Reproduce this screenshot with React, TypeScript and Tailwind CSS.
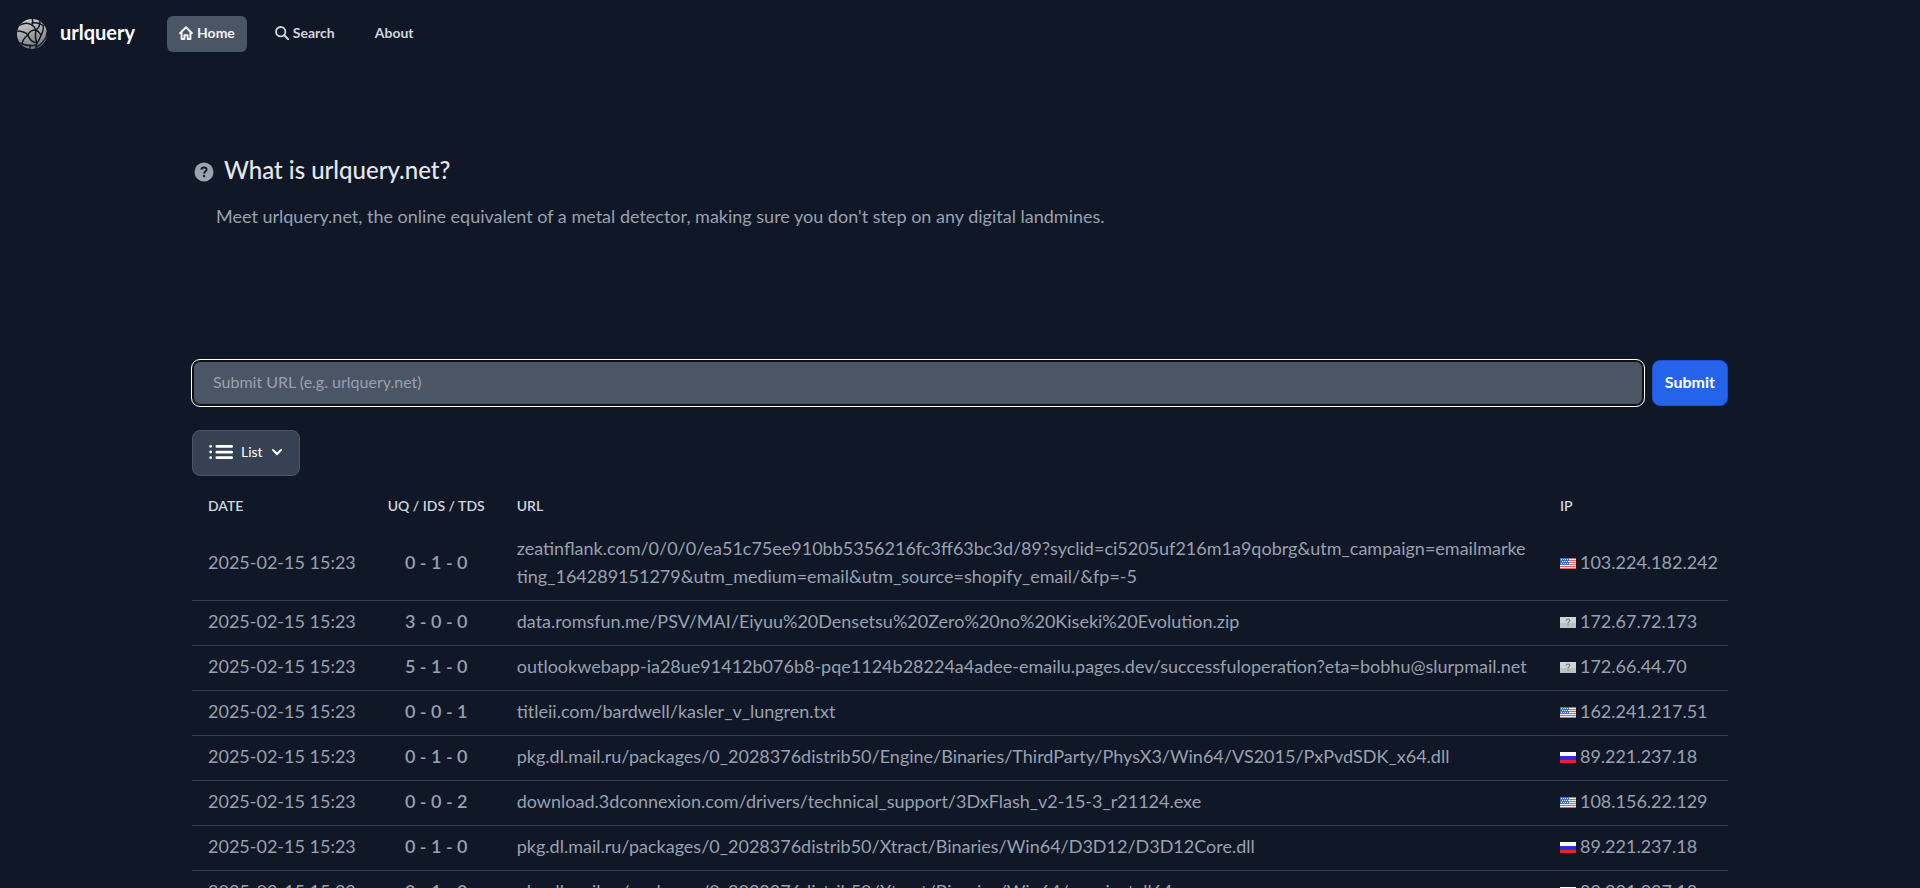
import React from "react";

type Country = "us" | "ru" | "unknown";

interface Report {
  id: number;
  date: string;
  score: string;
  url: string;
  ip: string;
  country: Country;
}

const reports: Report[] = [
  {
    id: 1,
    date: "2025-02-15 15:23",
    score: "0 - 1 - 0",
    url: "zeatinflank.com/0/0/0/ea51c75ee910bb5356216fc3ff63bc3d/89?syclid=ci5205uf216m1a9qobrg&utm_campaign=emailmarketing_164289151279&utm_medium=email&utm_source=shopify_email/&fp=-5",
    ip: "103.224.182.242",
    country: "us",
  },
  {
    id: 2,
    date: "2025-02-15 15:23",
    score: "3 - 0 - 0",
    url: "data.romsfun.me/PSV/MAI/Eiyuu%20Densetsu%20Zero%20no%20Kiseki%20Evolution.zip",
    ip: "172.67.72.173",
    country: "unknown",
  },
  {
    id: 3,
    date: "2025-02-15 15:23",
    score: "5 - 1 - 0",
    url: "outlookwebapp-ia28ue91412b076b8-pqe1124b28224a4adee-emailu.pages.dev/successfuloperation?eta=bobhu@slurpmail.net",
    ip: "172.66.44.70",
    country: "unknown",
  },
  {
    id: 4,
    date: "2025-02-15 15:23",
    score: "0 - 0 - 1",
    url: "titleii.com/bardwell/kasler_v_lungren.txt",
    ip: "162.241.217.51",
    country: "us",
  },
  {
    id: 5,
    date: "2025-02-15 15:23",
    score: "0 - 1 - 0",
    url: "pkg.dl.mail.ru/packages/0_2028376distrib50/Engine/Binaries/ThirdParty/PhysX3/Win64/VS2015/PxPvdSDK_x64.dll",
    ip: "89.221.237.18",
    country: "ru",
  },
  {
    id: 6,
    date: "2025-02-15 15:23",
    score: "0 - 0 - 2",
    url: "download.3dconnexion.com/drivers/technical_support/3DxFlash_v2-15-3_r21124.exe",
    ip: "108.156.22.129",
    country: "us",
  },
  {
    id: 7,
    date: "2025-02-15 15:23",
    score: "0 - 1 - 0",
    url: "pkg.dl.mail.ru/packages/0_2028376distrib50/Xtract/Binaries/Win64/D3D12/D3D12Core.dll",
    ip: "89.221.237.18",
    country: "ru",
  },
  {
    id: 8,
    date: "2025-02-15 15:23",
    score: "0 - 1 - 0",
    url: "pkg.dl.mail.ru/packages/0_2028376distrib50/Xtract/Binaries/Win64/acuninstall64.exe",
    ip: "89.221.237.18",
    country: "ru",
  },
];

const Logo = () => (
  <svg width="32" height="32" viewBox="0 0 32 32" aria-hidden="true">
    <defs>
      <linearGradient id="ball" x1="0.3" y1="0" x2="0.6" y2="1">
        <stop offset="0" stopColor="#cfcfcf" />
        <stop offset="1" stopColor="#77797d" />
      </linearGradient>
      <clipPath id="ballClip">
        <circle cx="16" cy="16" r="15" />
      </clipPath>
    </defs>
    <circle cx="16" cy="16" r="15" fill="url(#ball)" />
    <g
      clipPath="url(#ballClip)"
      fill="none"
      stroke="#111827"
      strokeWidth="1.5"
      strokeLinecap="round"
    >
      <path d="M4 7c4-2 9-2 12 0 2 1 3 3 4 5" />
      <path d="M16 7c1-2 1-4 0-7" />
      <path d="M16 5c4-1 7 0 10 2" />
      <path d="M20 12c3-2 4-5 4-9" />
      <path d="M20 12c-4 0-7 2-8 5" />
      <path d="M1 13c4 0 8 1 11 4" />
      <path d="M12 17c-4 3-6 6-6 10" />
      <path d="M12 17c1 4 4 7 9 8" />
      <path d="M20 12c-1 5-1 9 1 13 0 3-1 5-3 7" />
      <path d="M20 12c2 1 4 3 5 5 2-3 3-6 2-10" />
      <path d="M25 17c-1 3-2 6-4 8" />
      <path d="M31 14c0 6-4 11-10 15" />
      <path d="M4 25c4 2 9 4 16 2" />
      <path d="M14 27v5" />
    </g>
  </svg>
);

const HomeIcon = () => (
  <svg width="14" height="14" viewBox="0 0 14 14" fill="none" aria-hidden="true">
    <path
      d="M1 7.2 7 1.3l6 5.9M2.6 6v7h2.8V9.2h3.2V13h2.8V6"
      stroke="currentColor"
      strokeWidth="1.9"
      strokeLinejoin="round"
      strokeLinecap="round"
    />
  </svg>
);

const SearchIcon = () => (
  <svg width="14" height="14" viewBox="0 0 14 14" fill="none" aria-hidden="true">
    <circle cx="5.7" cy="5.7" r="4.7" stroke="currentColor" strokeWidth="1.8" />
    <path d="m9.3 9.3 3.9 3.9" stroke="currentColor" strokeWidth="2" strokeLinecap="round" />
  </svg>
);

const HelpIcon = () => (
  <svg className="mt-1" width="20" height="20" viewBox="0 0 20 20" aria-hidden="true">
    <circle cx="10" cy="10" r="9.5" fill="#9ca3af" />
    <path
      d="M7.4 7.7c.1-1.4 1.1-2.2 2.6-2.2s2.6.8 2.6 2.1c0 1.9-2.5 1.8-2.5 3.8"
      fill="none"
      stroke="#111827"
      strokeWidth="1.9"
    />
    <circle cx="10.1" cy="14" r="1.2" fill="#111827" />
  </svg>
);

const ListIcon = () => (
  <svg width="24" height="16" viewBox="0 0 24 16" fill="currentColor" aria-hidden="true">
    <circle cx="1.7" cy="2.3" r="1.4" />
    <circle cx="1.7" cy="8" r="1.4" />
    <circle cx="1.7" cy="13.7" r="1.4" />
    <rect x="6.5" y="1" width="17.5" height="2.7" rx="1.2" />
    <rect x="6.5" y="6.7" width="17.5" height="2.7" rx="1.2" />
    <rect x="6.5" y="12.3" width="17.5" height="2.7" rx="1.2" />
  </svg>
);

const ChevronIcon = () => (
  <svg width="12" height="12" viewBox="0 0 12 12" fill="none" aria-hidden="true">
    <path d="m2 4 4 4 4-4" stroke="currentColor" strokeWidth="2" strokeLinecap="round" />
  </svg>
);

const Flag: React.FC<{ country: Country }> = ({ country }) => {
  if (country === "us") {
    return (
      <svg className="-mb-px" width="16" height="11" viewBox="0 0 16 11" role="img" aria-label="United States">
        <rect width="16" height="11" fill="#f4ecec" />
        <path
          d="M0 .5h16M0 2.5h16M0 4.5h16M0 6.5h16M0 8.5h16M0 10.5h16"
          stroke="#d8645c"
        />
        <rect width="9" height="7" fill="#3f6fd0" />
        <path
          d="M1 1.5h8M2 3.5h7M1 5.5h8"
          stroke="#dfe8fb"
          strokeDasharray="1 1"
        />
      </svg>
    );
  }
  if (country === "ru") {
    return (
      <svg className="-mb-px" width="16" height="11" viewBox="0 0 16 11" role="img" aria-label="Russia">
        <rect width="16" height="4" fill="#fbfbfb" />
        <rect y="4" width="16" height="4" fill="#2b2be0" />
        <rect y="8" width="16" height="3" fill="#f0202b" />
      </svg>
    );
  }
  return (
    <svg className="-mb-px" width="16" height="11" viewBox="0 0 16 11" role="img" aria-label="Unknown country">
      <rect width="16" height="11" fill="#cfd5d6" />
      <rect y="6" width="16" height="5" fill="#bcc3c4" />
      <path
        d="M6.4 3.8c0-1.1.7-1.7 1.7-1.7s1.7.6 1.7 1.5c0 1.2-1.7 1.2-1.7 2.8M8.1 7.6v1.3"
        fill="none"
        stroke="#7f8688"
        strokeWidth="1.2"
      />
    </svg>
  );
};

const Navbar = () => (
  <nav className="flex items-center px-4 py-4">
    <a href="#" className="flex items-center gap-3 text-xl font-bold text-white">
      <Logo />
      <span className="pb-1">urlquery</span>
    </a>
    <div className="ml-8 flex items-center gap-4 text-sm font-bold text-gray-300">
      <a
        href="#"
        aria-current="page"
        className="flex h-9 items-center gap-1 rounded-md bg-gray-600 px-3 pb-0.5 text-gray-100"
      >
        <HomeIcon />
        Home
      </a>
      <a href="#" className="flex h-9 items-center gap-1 rounded-md px-3 pb-0.5">
        <SearchIcon />
        Search
      </a>
      <a href="#" className="flex h-9 items-center rounded-md px-3 pb-0.5">
        About
      </a>
    </div>
  </nav>
);

const ReportTable = () => (
  <table className="mt-2 w-full text-left text-lg text-gray-400">
    <thead className="text-sm text-gray-300 uppercase">
      <tr>
        <th scope="col" className="px-4 py-3 font-semibold">Date</th>
        <th scope="col" className="px-4 py-3 text-center font-semibold whitespace-nowrap">
          UQ / IDS / TDS
        </th>
        <th scope="col" className="px-4 py-3 font-semibold">URL</th>
        <th scope="col" className="px-4 py-3 font-semibold">IP</th>
      </tr>
    </thead>
    <tbody>
      {reports.map((report) => (
        <tr key={report.id} className="border-b border-gray-700">
          <td className="px-4 pt-1.5 pb-2.5 whitespace-nowrap">{report.date}</td>
          <td className="px-4 pt-1.5 pb-2.5 text-center font-semibold whitespace-nowrap">
            {report.score}
          </td>
          <td className="w-full px-4 pt-1.5 pb-2.5 break-all">
            <a href="#">{report.url}</a>
          </td>
          <td className="pt-1.5 pr-2.5 pb-2.5 pl-4 whitespace-nowrap">
            <div className="flex items-baseline gap-1">
              <Flag country={report.country} />
              {report.ip}
            </div>
          </td>
        </tr>
      ))}
    </tbody>
  </table>
);

const App = () => {
  return (
    <div className="min-h-screen bg-gray-900 font-[Lato,Carlito,sans-serif]">
      <Navbar />
      <main className="mx-auto w-4/5">
        {/* intro */}
        <section className="px-0.5 pt-[86px]">
          <h1 className="flex items-center gap-2.5 text-2xl font-medium text-gray-200">
            <HelpIcon />
            What is urlquery.net?
          </h1>
          <p className="mt-4 pl-[22px] text-lg text-gray-400">
            Meet urlquery.net, the online equivalent of a metal detector, making sure you don't
            step on any digital landmines.
          </p>
        </section>

        {/* submit form */}
        <form className="mt-[130px] flex gap-2" onSubmit={(e) => e.preventDefault()}>
          <input
            type="text"
            autoFocus
            aria-label="Submit URL"
            placeholder="Submit URL (e.g. urlquery.net)"
            className="h-[46px] min-w-0 flex-1 rounded-lg border border-[#101010] bg-gray-600 px-5 pb-1 text-base text-white caret-white inset-ring inset-ring-[#101010] outline outline-white placeholder:text-gray-400"
          />
          <button
            type="submit"
            className="rounded-lg border border-[#1d4ed8] bg-[#2563eb] px-3 pb-0.5 text-base font-bold text-white"
          >
            Submit
          </button>
        </form>

        <button
          type="button"
          className="mt-6 flex h-[46px] items-center gap-2 rounded-lg border border-gray-600 bg-gray-700 px-4 pb-0.5 text-sm text-white"
        >
          <ListIcon />
          List
          <ChevronIcon />
        </button>

        <ReportTable />
      </main>
    </div>
  );
};

export default App;
